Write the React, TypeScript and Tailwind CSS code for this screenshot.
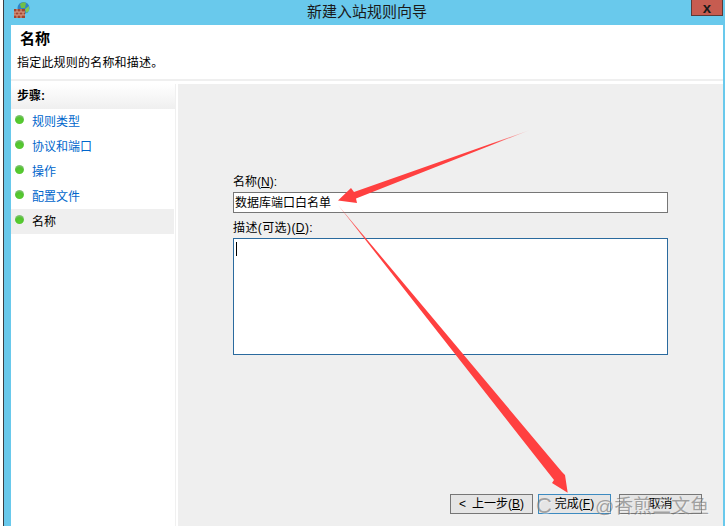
import React from 'react';

const StepDot = () => (
  <span className="w-[9px] h-[9px] -translate-y-[2px] rounded-full bg-[radial-gradient(circle_at_50%_75%,#58d030_0%,#52c22f_50%,#a9c4ae_100%)] shrink-0" />
);

const steps = ['规则类型', '协议和端口', '操作', '配置文件'];

const FirewallIcon = () => (
  <svg width="17" height="18" viewBox="0 0 17 18">
    <circle cx="10.5" cy="7" r="6" fill="#2f83c9" />
    <path d="M7 3 Q10 0 13 2 L12 7 L8 7 Z" fill="#6fbf4a" />
    <path d="M12 8 L16 5 L16 10 L13 12 Z" fill="#7ec85a" />
    <rect x="1" y="8" width="11" height="9" fill="#a3452f" />
    <path d="M1 11 H12 M1 14 H12 M4 8 V11 M8 8 V11 M2 11 V14 M6 11 V14 M10 11 V14 M4 14 V17 M8 14 V17" stroke="#d99f88" strokeWidth="1" fill="none" />
  </svg>
);

const App: React.FC = () => {
  return (
    <div className="relative w-[725px] h-[526px] overflow-hidden bg-white pl-[3px] font-['Liberation_Sans','Noto_Sans_CJK_SC',sans-serif] text-[12px] text-black">
      <div className="h-full border-l border-[#3a3f45] bg-[#69c9ec]">
        {/* Title bar */}
        <div className="relative h-[25px] flex items-center justify-center text-[15px] text-[#1a1a1a] pl-[5px]">
          <div className="absolute left-[9px] top-[1px]">
            <FirewallIcon />
          </div>
          <span>新建入站规则向导</span>
          <div className="absolute right-[2px] top-0 w-[32px] h-[16px] bg-[#c75c50] border border-t-0 border-[#5c3a38] flex items-center justify-center">
            <span className="text-[15px] font-bold leading-none">x</span>
          </div>
        </div>

        <div className="ml-[7px] mr-[2px] h-[501px] flex flex-col bg-white">
          {/* Header */}
          <div className="h-[56px] border-b-2 border-[#efefef] shrink-0">
            <div className="pl-[9px] pt-[5px] h-[27px] text-[15px] font-bold leading-[18px]">名称</div>
            <div className="pl-[6px] pt-[3px] text-[12px] leading-[16px] tracking-[0.2px]">指定此规则的名称和描述。</div>
          </div>

          <div className="flex flex-1 min-h-0 mt-[3px]">
            {/* Steps */}
            <div className="w-[165px] shrink-0 border-r border-[#f0f0f0]">
              <div className="h-[25px] pl-[6px] pb-[2px] flex items-center text-[12px] font-bold bg-gradient-to-b from-white to-[#efefef]">步骤:</div>
              <div className="flex flex-col">
                {steps.map((s) => (
                  <div key={s} className="h-[25px] flex items-center gap-[8px] pl-[4px] text-[#0066cc]">
                    <StepDot />
                    <span>{s}</span>
                  </div>
                ))}
                <div className="h-[25px] w-[163px] flex items-center gap-[8px] pl-[4px] bg-[#efefef]">
                  <StepDot />
                  <span>名称</span>
                </div>
              </div>
            </div>

            {/* Form */}
            <div className="flex-1 ml-[2px] bg-[#efefef] flex flex-col pl-[55px] pr-[55px] pt-[88px] relative">
              <label className="h-[20px] leading-[16px] pt-[2px]">名称(<u>N</u>):</label>
              <div className="h-[21px] bg-white border border-[#767676] pl-[1px] flex items-center">数据库端口白名单</div>
              <label className="h-[25px] pt-[7px] leading-[16px] tracking-[0.4px]">描述(可选)(<u>D</u>):</label>
              <div className="h-[117px] bg-white border border-[#2a6a9e] pl-[2px] pt-[3px]">
                <div className="w-px h-[14px] bg-black" />
              </div>

              <div className="absolute right-[21px] top-[410px] flex items-center">
                <button className="w-[83px] h-[20px] bg-[#e5e5e5] border border-[#767676] text-[12px] flex items-center justify-center gap-[6px]">
                  <span>&lt;</span>
                  <span>上一步(<u>B</u>)</span>
                </button>
                <button className="ml-[5px] w-[73px] h-[20px] bg-[#e5e5e5] border border-[#3c8ac0] text-[12px]">完成(<u>F</u>)</button>
                <button className="ml-[8px] w-[83px] h-[20px] bg-[#e5e5e5] border border-[#767676] text-[12px]">取消</button>
              </div>
            </div>
          </div>
        </div>
      </div>

      {/* Annotation arrows */}
      <svg className="absolute left-0 top-0 pointer-events-none" width="725" height="526" viewBox="0 0 725 526">
        <defs>
          <linearGradient id="fade1" x1="530" y1="130" x2="340" y2="200" gradientUnits="userSpaceOnUse">
            <stop offset="0" stopColor="#ff4040" stopOpacity="0.1" />
            <stop offset="0.2" stopColor="#ff4040" />
          </linearGradient>
          <linearGradient id="fade2" x1="338" y1="204" x2="570" y2="493" gradientUnits="userSpaceOnUse">
            <stop offset="0" stopColor="#ff4040" stopOpacity="0.7" />
            <stop offset="0.15" stopColor="#ff4040" />
          </linearGradient>
        </defs>
        <path d="M530 130 L354 192 L351 188 L338 200.5 L357 203 L356 198.5 Z" fill="url(#fade1)" />
        <path d="M338 205 L554 480 L552 483 L567.7 492.7 L565 475 L562 472 Z" fill="url(#fade2)" />
      </svg>

      {/* Watermark */}
      <div className="absolute left-[536px] top-[494px] text-[19px] leading-[24px] text-[#70707099] [text-shadow:1px_1px_0_#ffffff66] pointer-events-none whitespace-nowrap">
        <span className="text-[22px]">C</span>
        <span className="ml-[43px]">@香煎三文鱼</span>
      </div>
    </div>
  );
};

export default App;
